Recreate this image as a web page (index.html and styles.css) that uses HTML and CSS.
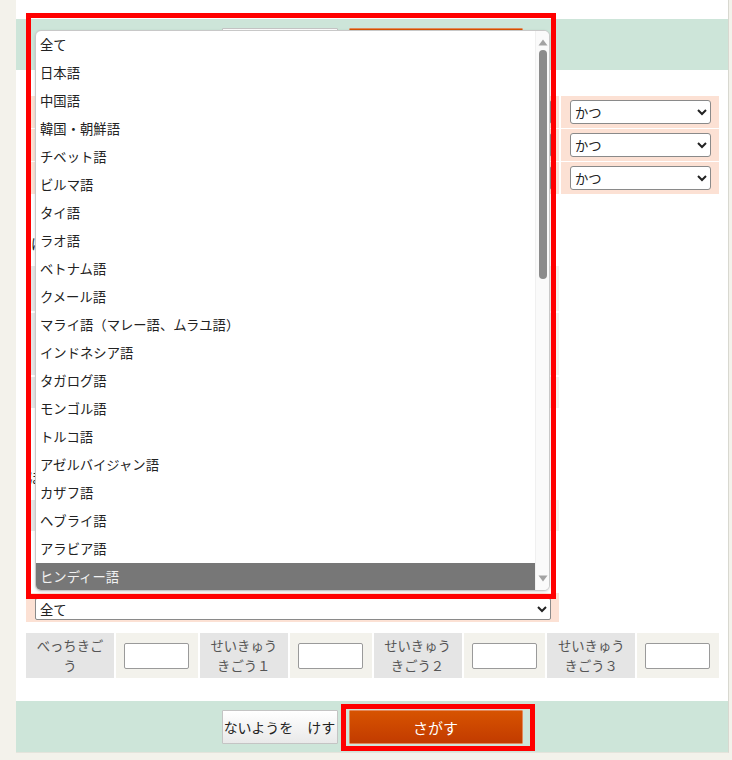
FILE: index.html
```html
<!DOCTYPE html>
<html lang="ja">
<head>
<meta charset="utf-8">
<title>けんさく</title>
<link rel="stylesheet" href="styles.css">
</head>
<body>
<div class="page">
  <div class="bar">
    <button class="btn btn-reset">ないようを　けす</button>
    <button class="btn btn-search">さがす</button>
  </div>

  <div class="form">
    <div class="grid3">
      <div class="cell"></div>
      <div class="cell mid"><span class="field"></span></div>
      <div class="cell right"><select class="sel"><option>かつ</option><option>または</option></select></div>
      <div class="cell"></div>
      <div class="cell mid"><span class="field"></span></div>
      <div class="cell right"><select class="sel"><option>かつ</option><option>または</option></select></div>
      <div class="cell"></div>
      <div class="cell mid"><span class="field"></span></div>
      <div class="cell right"><select class="sel"><option>かつ</option><option>または</option></select></div>
    </div>

    <p class="sec-title">ほ</p>
    <div class="tbl">
      <div class="tl"></div><div class="tv"></div>
      <div class="tl tall"></div><div class="tv tall"></div>
      <div class="tl short"></div><div class="tv short"></div>
    </div>

    <div class="marker"></div>
    <p class="sec-title2">ほ</p>
    <div class="tbl tbl2">
      <div class="tl short"></div><div class="tv short"></div>
    </div>
    <div class="marker marker2"></div>

    <div class="langrow">
      <select class="sel-wide"><option>全て</option></select>
    </div>

    <div class="codes">
      <div class="clbl">べっちきごう</div>
      <div class="cin"><input class="code" type="text"></div>
      <div class="clbl">せいきゅうきごう１</div>
      <div class="cin"><input class="code" type="text"></div>
      <div class="clbl">せいきゅうきごう２</div>
      <div class="cin"><input class="code" type="text"></div>
      <div class="clbl">せいきゅうきごう３</div>
      <div class="cin"><input class="code" type="text"></div>
    </div>
  </div>

  <div class="bar bar-bottom">
    <button class="btn btn-reset">ないようを　けす</button>
    <button class="btn btn-search">さがす</button>
  </div>
</div>

<div class="dropdown">
  <ul class="options">
    <li>全て</li>
    <li>日本語</li>
    <li>中国語</li>
    <li>韓国・朝鮮語</li>
    <li>チベット語</li>
    <li>ビルマ語</li>
    <li>タイ語</li>
    <li>ラオ語</li>
    <li>ベトナム語</li>
    <li>クメール語</li>
    <li>マライ語（マレー語、ムラユ語）</li>
    <li>インドネシア語</li>
    <li>タガログ語</li>
    <li>モンゴル語</li>
    <li>トルコ語</li>
    <li>アゼルバイジャン語</li>
    <li>カザフ語</li>
    <li>ヘブライ語</li>
    <li>アラビア語</li>
    <li class="active">ヒンディー語</li>
  </ul>
  <div class="scroll">
    <svg class="arrow" width="10" height="7" viewBox="0 0 10 7"><path d="M5 0.5 L9.5 6.5 L0.5 6.5 Z" fill="#a3a3a3"/></svg>
    <div class="track"><div class="thumb"></div></div>
    <svg class="arrow" width="10" height="7" viewBox="0 0 10 7"><path d="M0.5 0.5 L9.5 0.5 L5 6.5 Z" fill="#a3a3a3"/></svg>
  </div>
</div>

<div class="mark mark-list"></div>
<div class="mark mark-btn"></div>
</body>
</html>
```

FILE: styles.css
```css
* { box-sizing: border-box; }

body {
  margin: 0;
  background: #f3f2eb;
  font-family: "Noto Sans CJK JP", "Noto Sans", sans-serif;
  font-size: 13.33px;
  color: #222;
}

.page {
  margin-left: 16px;
  width: 713px;
  height: 753px;
  background: #fff;
  border-right: 1px solid #d8d8d0;
  border-bottom: 1px solid #e4e4dc;
  padding-top: 19px;
  display: flex;
  flex-direction: column;
}

.bar {
  height: 51px;
  background: #cde5d9;
  display: flex;
  justify-content: center;
  align-items: flex-start;
  gap: 11px;
  padding-top: 9px;
  flex-shrink: 0;
}

.bar-bottom { margin-top: auto; }

.btn {
  height: 34px;
  margin: 0;
  padding: 0;
  font-family: "Noto Sans CJK JP", sans-serif;
  cursor: pointer;
}

.btn-reset {
  width: 116px;
  font-size: 14px;
  color: #222;
  background: linear-gradient(#ffffff, #e9e9e9);
  border: 1px solid #c4c4c4;
  border-radius: 1px;
  white-space: nowrap;
}

.btn-search {
  width: 174px;
  font-size: 15px;
  color: #fff;
  background: linear-gradient(#d75300, #c23b00);
  border: 1px solid #e2885a;
  border-radius: 1px;
}

.form {
  margin-top: 26px;
  padding: 0 9px 0 10px;
}

.grid3 {
  display: grid;
  grid-template-columns: 89px 1fr 158px;
  grid-auto-rows: 32px;
  gap: 1px 2px;
}

.cell { background: #fce1d4; }

.mid { padding: 4px 8px 4px 8px; }
.field {
  display: block;
  height: 24px;
  border: 1px solid #8a8a8a;
  border-radius: 2px;
  background: #fff;
}

.right { padding: 4px 0 0 9px; }

.sel {
  width: 141px;
  height: 24px;
  font-family: "Noto Sans CJK JP", sans-serif;
  font-size: 13.33px;
  color: #222;
  background: #fff;
  border: 1px solid #8a8a8a;
  border-radius: 3px;
}

.sec-title {
  margin: 40px 0 12px;
  width: 9px;
  height: 20px;
  overflow: hidden;
  line-height: 20px;
  border-left: 4px solid #e06a1a;
  padding-left: 1px;
  font-size: 13.33px;
}

.tbl {
  display: grid;
  grid-template-columns: 89px 1fr;
  grid-template-rows: 45px 62px 31px;
  gap: 2px;
  width: 533px;
}
.tbl2 { grid-template-rows: 31px; margin-top: 12px; }
.tl { background: #e6e6e6; }
.tv { background: #f3f2ec; }

.marker {
  width: 5px;
  height: 12px;
  margin-top: 32px;
  background: #e06a1a;
}
.marker2 { margin-top: 33px; height: 10px; }

.sec-title2 {
  margin: 16px 0 0;
  width: 9px;
  height: 20px;
  overflow: hidden;
  line-height: 20px;
  padding-left: 2px;
}

.langrow {
  margin-top: 19px;
  width: 533px;
  height: 29px;
  background: #fce1d4;
  padding: 5px 0 0 9px;
}

.sel-wide {
  width: 516px;
  height: 22px;
  font-family: "Noto Sans CJK JP", sans-serif;
  font-size: 13.33px;
  color: #222;
  background: #fff;
  border: 1px solid #8a8a8a;
  border-radius: 2px;
}

.codes {
  margin-top: 11px;
  display: grid;
  grid-template-columns: 88px 1fr 88px 1fr 88px 1fr 88px 1fr;
  gap: 2px;
  height: 45px;
}

.clbl {
  background: #e5e5e5;
  color: #555;
  text-align: center;
  line-height: 20px;
  padding: 3px 6px 2px;
  font-size: 13.33px;
}

.cin {
  background: #f3f2ec;
  display: flex;
  align-items: center;
  padding-left: 8px;
}

.code {
  width: 65px;
  height: 26px;
  margin: 0;
  border: 1px solid #9a9a9a;
  border-radius: 2px;
  background: #fff;
}

/* open dropdown list, drawn over the form */
.dropdown {
  position: absolute;
  left: 35px;
  top: 30px;
  width: 515px;
  height: 561px;
  background: #fff;
  border: 1px solid #c8c8c8;
  border-radius: 6px;
  overflow: hidden;
  display: flex;
  box-shadow: 0 1px 3px rgba(0, 0, 0, 0.15);
}

.options {
  list-style: none;
  margin: 0;
  padding: 0;
  flex: 1;
}

.options li {
  height: 28px;
  line-height: 28px;
  padding-left: 4px;
  font-size: 13.33px;
  color: #222;
  white-space: nowrap;
}

.options li.active {
  background: #777777;
  color: #f2f2f2;
}

.scroll {
  width: 14px;
  background: #fafafa;
  border-left: 1px solid #f0f0f0;
  display: flex;
  flex-direction: column;
  align-items: center;
  padding: 8px 0 8px;
}

.arrow { display: block; flex-shrink: 0; }

.track {
  flex: 1;
  width: 8px;
  padding-top: 4px;
}

.thumb {
  width: 8px;
  height: 229px;
  border-radius: 4px;
  background: #8c8c8c;
}

/* red annotation frames */
.mark {
  position: absolute;
  border: 5px solid #ff0000;
  pointer-events: none;
}

.mark-list {
  left: 26px;
  top: 13px;
  width: 530px;
  height: 586px;
}

.mark-btn {
  left: 341px;
  top: 704px;
  width: 194px;
  height: 47px;
}
```
